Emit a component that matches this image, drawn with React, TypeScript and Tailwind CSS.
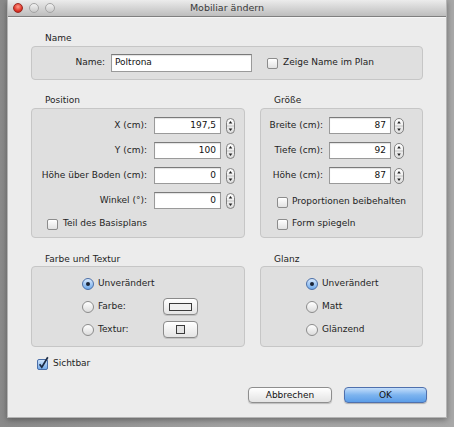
import React from 'react'

const font = "font-['DejaVu_Sans',sans-serif]"

function Stepper({ w = 9 }: { w?: number }) {
  return (
    <svg width={w} height={16} viewBox={`0 0 ${w} 16`} className="shrink-0">
      <defs>
        <linearGradient id="stp" x1="0" y1="0" x2="0" y2="1">
          <stop offset="0" stopColor="#ffffff" />
          <stop offset="1" stopColor="#dcdcdc" />
        </linearGradient>
      </defs>
      <rect x="0.5" y="0.5" width={w - 1} height="15" rx={(w - 1) / 2} fill="url(#stp)" stroke="#808080" />
      <line x1="1" y1="8" x2={w - 1} y2="8" stroke="#c4c4c4" />
      <path d={`M${w / 2 - 1.8} 5.5 L${w / 2} 3 L${w / 2 + 1.8} 5.5 Z`} fill="#222" />
      <path d={`M${w / 2 - 1.8} 10.5 L${w / 2} 13 L${w / 2 + 1.8} 10.5 Z`} fill="#222" />
    </svg>
  )
}

function Checkbox({ checked = false }: { checked?: boolean }) {
  if (checked) {
    return (
      <svg width={12} height={14} viewBox="0 0 12 14" className="shrink-0 -mt-[3px]">
        <defs>
          <linearGradient id="cbx" x1="0" y1="0" x2="0" y2="1">
            <stop offset="0" stopColor="#d3e6fb" />
            <stop offset="1" stopColor="#6ea7e8" />
          </linearGradient>
        </defs>
        <rect x="0.5" y="3.5" width="10" height="10" rx="1.5" fill="url(#cbx)" stroke="#4a6ea8" />
        <path d="M2.6 8.2 L4.8 11.2 L10.8 1.2" fill="none" stroke="#1b2a44" strokeWidth="1.7" />
      </svg>
    )
  }
  return (
    <span className="block w-[11px] h-[11px] shrink-0 rounded-[2px] border border-[#8c8c8c] bg-gradient-to-b from-white to-[#e2e2e2] shadow-[inset_0_1px_0_#fff]" />
  )
}

function Radio({ on = false }: { on?: boolean }) {
  if (on) {
    return (
      <span className="flex items-center justify-center w-[12px] h-[12px] shrink-0 rounded-full border border-[#4b6fa8] bg-gradient-to-b from-[#d8e9fc] to-[#6fa9ea]">
        <span className="block w-[4px] h-[4px] rounded-full bg-[#1a2436]" />
      </span>
    )
  }
  return (
    <span className="block w-[12px] h-[12px] shrink-0 rounded-full border border-[#8c8c8c] bg-gradient-to-b from-white to-[#dcdcdc]" />
  )
}

function NumField({ value, w }: { value: string; w: number }) {
  return (
    <div
      className="h-[17px] shrink-0 bg-white border border-[#9a9a9a] border-t-[#7a7a7a] shadow-[inset_0_1px_1px_rgba(0,0,0,0.12)] flex items-center justify-end pr-[4px] text-[9px] text-[#111]"
      style={{ width: w }}
    >
      {value}
    </div>
  )
}

function GroupLabel({ children }: { children: React.ReactNode }) {
  return <div className="pl-[14px] leading-[14px] text-[9px] text-[#1e1e1e]">{children}</div>
}

export default function App() {
  const posRows = [
    ['X (cm):', '197,5'],
    ['Y (cm):', '100'],
    ['Höhe über Boden (cm):', '0'],
    ['Winkel (°):', '0'],
  ]
  const sizeRows = [
    ['Breite (cm):', '87'],
    ['Tiefe (cm):', '92'],
    ['Höhe (cm):', '87'],
  ]

  return (
    <div className={`${font} w-[454px] h-[427px] bg-gradient-to-r from-[#8a8a8a] via-[#a2a2a2] to-[#a8a8a8] pl-[7px] pr-[8px] pb-[9px] flex text-[#1e1e1e]`}>
      <div className="flex-1 flex flex-col bg-[#ececec] border-x border-b border-[#b4b4b4] shadow-[0_2px_6px_rgba(0,0,0,0.35)]">
        {/* Title bar */}
        <div className="relative h-[17px] shrink-0 border-b border-[#7f7f7f] bg-gradient-to-b from-[#ececec] to-[#bdbdbd] flex items-center justify-center">
          <div className="absolute left-[5px] top-[3px] flex gap-[6px]">
            <span className="block w-[10px] h-[10px] rounded-full border border-[#9a2a22] bg-[radial-gradient(circle_at_50%_35%,#ff9a8a,#e0372a_60%,#a8120c)]" />
            <span className="block w-[10px] h-[10px] rounded-full border border-[#a4a4a4] bg-gradient-to-b from-[#f2f2f2] to-[#c9c9c9]" />
            <span className="block w-[10px] h-[10px] rounded-full border border-[#a4a4a4] bg-gradient-to-b from-[#f2f2f2] to-[#c9c9c9]" />
          </div>
          <span className="text-[9.5px] text-[#3a3a3a]">Mobiliar ändern</span>
        </div>
        <div className="h-px bg-[#f6f6f6]" />

        <div className="px-[23px] flex flex-col">
          {/* Name */}
          <div className="mt-[13px]">
            <GroupLabel>Name</GroupLabel>
          </div>
          <div className="mt-[1px] h-[34px] rounded-[4px] border border-[#c6c6c6] bg-[#dfdfdf] flex items-center">
            <div className="w-[73px] text-right text-[9px]">Name:</div>
            <div className="ml-[6px] w-[141px] h-[18px] bg-white border border-[#9a9a9a] border-t-[#7a7a7a] shadow-[inset_0_1px_1px_rgba(0,0,0,0.12)] flex items-center pl-[3px] text-[9px] text-[#111]">
              Poltrona
            </div>
            <div className="ml-[15px]">
              <Checkbox />
            </div>
            <span className="ml-[5px] text-[9px]">Zeige Name im Plan</span>
          </div>

          {/* Position / Größe */}
          <div className="mt-[13px] flex gap-[15px]">
            <div className="w-[214px] flex flex-col">
              <GroupLabel>Position</GroupLabel>
              <div className="mt-[1px] h-[130px] rounded-[4px] border border-[#c6c6c6] bg-[#dfdfdf] pt-[8px] flex flex-col gap-[8px]">
                {posRows.map(([label, value]) => (
                  <div key={label} className="h-[17px] flex items-center">
                    <div className="w-[115px] text-right text-[9px] whitespace-nowrap">{label}</div>
                    <div className="ml-[7px]">
                      <NumField value={value} w={67} />
                    </div>
                    <div className="ml-[5px]">
                      <Stepper />
                    </div>
                  </div>
                ))}
                <div className="h-[14px] flex items-center pl-[15px]">
                  <Checkbox />
                  <span className="ml-[5px] text-[9px]">Teil des Basisplans</span>
                </div>
              </div>
            </div>
            <div className="w-[163px] flex flex-col">
              <GroupLabel>Größe</GroupLabel>
              <div className="mt-[1px] h-[130px] rounded-[4px] border border-[#c6c6c6] bg-[#dfdfdf] pt-[8px] flex flex-col">
                <div className="flex flex-col gap-[8px]">
                  {sizeRows.map(([label, value]) => (
                    <div key={label} className="h-[17px] flex items-center">
                      <div className="w-[62px] text-right text-[9px] whitespace-nowrap">{label}</div>
                      <div className="ml-[6px]">
                        <NumField value={value} w={62} />
                      </div>
                      <div className="ml-[3px]">
                        <Stepper w={10} />
                      </div>
                    </div>
                  ))}
                </div>
                <div className="mt-[11px] h-[14px] flex items-center pl-[16px]">
                  <Checkbox />
                  <span className="ml-[4px] text-[9px]">Proportionen beibehalten</span>
                </div>
                <div className="mt-[8px] h-[14px] flex items-center pl-[16px]">
                  <Checkbox />
                  <span className="ml-[4px] text-[9px]">Form spiegeln</span>
                </div>
              </div>
            </div>
          </div>

          {/* Farbe und Textur / Glanz */}
          <div className="mt-[14px] flex gap-[15px]">
            <div className="w-[214px] flex flex-col">
              <GroupLabel>Farbe und Textur</GroupLabel>
              <div className="h-[81px] rounded-[4px] border border-[#c6c6c6] bg-[#dfdfdf] pt-[8px] flex flex-col gap-[6px]">
                <div className="h-[17px] flex items-center pl-[50px]">
                  <Radio on />
                  <span className="ml-[4px] text-[9px]">Unverändert</span>
                </div>
                <div className="h-[17px] flex items-center pl-[50px]">
                  <div className="w-[81px] flex items-center">
                    <Radio />
                    <span className="ml-[4px] text-[9px]">Farbe:</span>
                  </div>
                  <div className="w-[35px] h-[17px] rounded-[4px] border border-[#8a8a8a] bg-gradient-to-b from-white to-[#e4e4e4] shadow-[0_1px_0_rgba(0,0,0,0.12)] flex items-center justify-center">
                    <span className="block w-[23px] h-[8px] border border-[#3a3a3a] bg-[#f0f0f0]" />
                  </div>
                </div>
                <div className="h-[17px] flex items-center pl-[50px]">
                  <div className="w-[81px] flex items-center">
                    <Radio />
                    <span className="ml-[4px] text-[9px]">Textur:</span>
                  </div>
                  <div className="w-[35px] h-[17px] rounded-[4px] border border-[#8a8a8a] bg-gradient-to-b from-white to-[#e4e4e4] shadow-[0_1px_0_rgba(0,0,0,0.12)] flex items-center justify-center">
                    <span className="block w-[9px] h-[9px] border border-[#3a3a3a] bg-[#e4e4e4]" />
                  </div>
                </div>
              </div>
            </div>
            <div className="w-[163px] flex flex-col">
              <GroupLabel>Glanz</GroupLabel>
              <div className="h-[81px] rounded-[4px] border border-[#c6c6c6] bg-[#dfdfdf] pt-[8px] flex flex-col gap-[6px]">
                {['Unverändert', 'Matt', 'Glänzend'].map((t, i) => (
                  <div key={t} className="h-[17px] flex items-center pl-[45px]">
                    <Radio on={i === 0} />
                    <span className="ml-[4px] text-[9px]">{t}</span>
                  </div>
                ))}
              </div>
            </div>
          </div>

          {/* Sichtbar */}
          <div className="mt-[10px] h-[14px] flex items-center pl-[6px]">
            <Checkbox checked />
            <span className="ml-[4px] text-[9px]">Sichtbar</span>
          </div>
        </div>

        {/* Buttons */}
        <div className="mt-[16px] flex justify-end gap-[12px] pr-[19px]">
          <button className="w-[84px] h-[16px] rounded-[4px] border border-[#8e8e8e] bg-gradient-to-b from-white to-[#e3e3e3] shadow-[0_1px_1px_rgba(0,0,0,0.2)] text-[9px] text-[#111] leading-none">
            Abbrechen
          </button>
          <button className="w-[83px] h-[16px] rounded-[4px] border border-[#4f70ad] bg-gradient-to-b from-[#c4defa] via-[#7db4ef] to-[#5b9de8] shadow-[0_1px_1px_rgba(0,0,0,0.25)] text-[9px] text-[#111] leading-none">
            OK
          </button>
        </div>
      </div>
    </div>
  )
}
